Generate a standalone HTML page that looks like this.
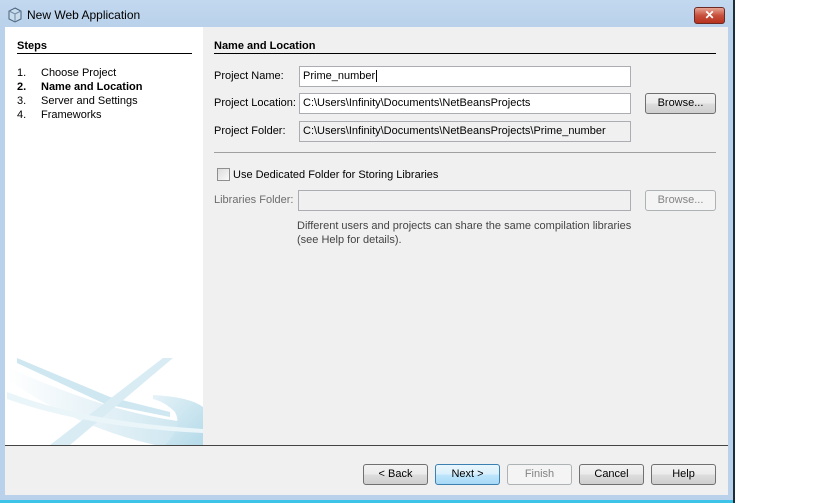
<!DOCTYPE html>
<html><head><style>
*{margin:0;padding:0;box-sizing:border-box}
body{width:819px;height:503px;background:#fff;position:relative;overflow:hidden;font-family:"Liberation Sans",sans-serif;font-size:11px;color:#000}
.a{position:absolute}
.btn{position:absolute;height:21px;border:1px solid #707070;border-radius:3px;background:linear-gradient(#f2f2f2,#ebebeb 50%,#dddddd 51%,#cfcfcf);text-align:center;line-height:19px;font-size:11px}
.inp{position:absolute;height:21px;border:1px solid #abadb3;background:#fff;padding-left:3px;line-height:19px;font-size:11px}
</style></head><body>
<div class="a" style="left:0;top:0;width:733px;height:500px;background:#b9d1ea"></div>
<div class="a" style="left:0;top:0;width:733px;height:27px;background:linear-gradient(#c2d8ef,#b9d1ea)"></div>
<div class="a" style="left:733px;top:0;width:2px;height:503px;background:#1d2f3a"></div>
<div class="a" style="left:0;top:500px;width:733px;height:3px;background:#3ec3e8"></div>
<svg class="a" style="left:7px;top:7px" width="16" height="16" viewBox="0 0 16 16"><path d="M8 1L14 4V12L8 15L2 12V4Z" fill="#c9dcec" stroke="#44607a"/><path d="M2 4L8 7L14 4M8 7V15" fill="none" stroke="#6d8aa3"/></svg>
<div class="a" style="left:27px;top:8px;font-size:12px">New Web Application</div>
<div class="a" style="left:694px;top:7px;width:31px;height:17px;border:1px solid #6b2b24;border-radius:3px;background:linear-gradient(#e8a493,#c7503c 50%,#b8321e);color:#fff;font-weight:bold;text-align:center;line-height:14px;font-size:12px">✕</div>
<div class="a" style="left:5px;top:27px;width:723px;height:468px;background:#f0f0f0"></div>
<div class="a" style="left:5px;top:27px;width:198px;height:418px;background:#fff;overflow:hidden">
<svg width="198" height="418"><defs><linearGradient id="g" x1="0" x2="1"><stop offset="0" stop-color="#fff"/><stop offset="1" stop-color="#b6dae9"/></linearGradient><linearGradient id="h" x1="0" x2="1" y1="0" y2="1"><stop offset="0" stop-color="#e6f3f8"/><stop offset="1" stop-color="#b4dae9"/></linearGradient></defs>
<path d="M2 340 Q90 380 160 392 L198 398 L198 418 L150 418 Q70 400 2 352Z" fill="url(#g)" opacity=".75"/>
<path d="M12 331 L105 370 L165 385 L165 390 L100 377 L12 336Z" fill="#cfe7f1"/>
<path d="M45 418 L158 331 L168 331 L65 418Z" fill="#d9ecf4"/>
<path d="M148 368 Q185 370 198 380 L198 418 L160 418 Q178 400 170 385 Q160 375 148 372Z" fill="url(#h)"/>
<path d="M2 365 Q80 395 198 402 L198 406 Q80 400 2 372Z" fill="#eaf5f9"/>
</svg></div>
<div class="a" style="left:5px;top:445px;width:723px;height:1px;background:#444"></div>
<div class="a" style="left:17px;top:40px;font-weight:bold">Steps</div>
<div class="a" style="left:17px;top:53px;width:175px;height:1px;background:#000"></div>
<div class="a" style="left:17px;top:66px;line-height:14px">1.<br><b>2.</b><br>3.<br>4.</div>
<div class="a" style="left:41px;top:66px;line-height:14px">Choose Project<br><b>Name and Location</b><br>Server and Settings<br>Frameworks</div>
<div class="a" style="left:214px;top:40px;font-weight:bold">Name and Location</div>
<div class="a" style="left:214px;top:53px;width:502px;height:1px;background:#000"></div>
<div class="a" style="left:214px;top:70px">Project Name:</div>
<div class="inp" style="left:299px;top:66px;width:332px">Prime_number<span style="border-left:1px solid #000;margin-left:1px"></span></div>
<div class="a" style="left:214px;top:97px">Project Location:</div>
<div class="inp" style="left:299px;top:93px;width:332px">C:\Users\Infinity\Documents\NetBeansProjects</div>
<div class="btn" style="left:645px;top:93px;width:71px">Browse...</div>
<div class="a" style="left:214px;top:125px">Project Folder:</div>
<div class="inp" style="left:299px;top:121px;width:332px;background:#f0f0f0">C:\Users\Infinity\Documents\NetBeansProjects\Prime_number</div>
<div class="a" style="left:214px;top:152px;width:502px;height:1px;background:#a0a0a0"></div>
<div class="a" style="left:217px;top:168px;width:13px;height:13px;border:1px solid #8f8f8f;background:linear-gradient(135deg,#dcdcdc,#fafafa)"></div>
<div class="a" style="left:233px;top:169px">Use Dedicated Folder for Storing Libraries</div>
<div class="a" style="left:214px;top:194px;color:#6d6d6d">Libraries Folder:</div>
<div class="inp" style="left:298px;top:190px;width:333px;background:#f0f0f0"></div>
<div class="btn" style="left:645px;top:190px;width:71px;border-color:#adb2b5;background:#f4f4f4;color:#838383">Browse...</div>
<div class="a" style="left:297px;top:219px;color:#444;line-height:14px">Different users and projects can share the same compilation libraries<br>(see Help for details).</div>
<div class="btn" style="left:363px;top:464px;width:65px">&lt; Back</div>
<div class="btn" style="left:435px;top:464px;width:65px;border-color:#3c7fb1;background:linear-gradient(#eaf6fd,#d9f0fc 50%,#bee6fd 51%,#a7d9f5)">Next &gt;</div>
<div class="btn" style="left:507px;top:464px;width:65px;border-color:#adb2b5;background:#f4f4f4;color:#838383">Finish</div>
<div class="btn" style="left:579px;top:464px;width:65px">Cancel</div>
<div class="btn" style="left:651px;top:464px;width:65px">Help</div>
</body></html>
